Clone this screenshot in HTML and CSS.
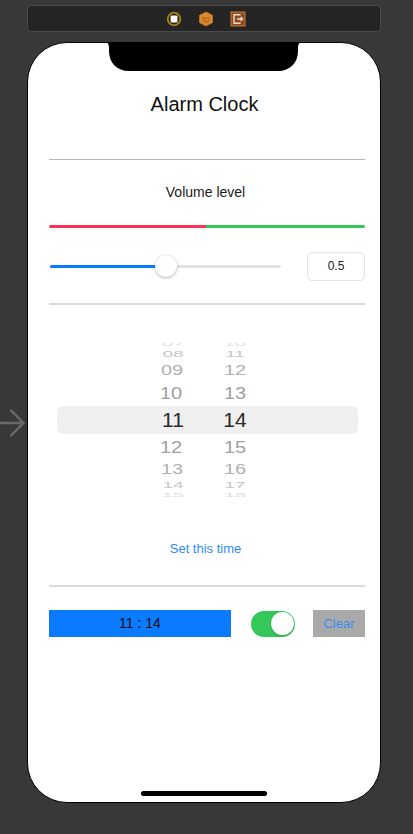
FILE: index.html
```html
<!DOCTYPE html>
<html>
<head>
<meta charset="utf-8">
<link rel="stylesheet" href="styles.css">
</head>
<body>
<div class="canvas">
  <div class="toolbar">
    <svg class="tb-icon" width="16" height="16" viewBox="0 0 16 16">
      <circle cx="8" cy="8" r="6.3" fill="#2a2310" stroke="#a88416" stroke-width="1.8"/>
      <rect x="4.6" y="4.6" width="6.8" height="6.8" rx="1" fill="#ffffff"/>
    </svg>
    <svg class="tb-icon" width="16" height="16" viewBox="0 0 16 16">
      <path d="M8 1 L14.5 4.3 V11.7 L8 15 L1.5 11.7 V4.3 Z" fill="#dd8a2e" stroke="#c0701e" stroke-width="0.8"/>
      <path d="M5 6.2 L8 7.6 L11 6.2 M8 7.6 V11.4 M5 6.2 V9.8 L8 11.4 L11 9.8 V6.2" fill="none" stroke="#a8601c" stroke-width="0.9"/>
    </svg>
    <svg class="tb-icon" width="16" height="16" viewBox="0 0 16 16">
      <rect x="1" y="1" width="14" height="14" fill="#8c4a1e" stroke="#c97c34" stroke-width="1"/>
      <path d="M10 4.5 V3.8 H4 V12.2 H10 V11.5" fill="none" stroke="#e8d8c8" stroke-width="1.4"/>
      <path d="M7 8 H12.5 M10.6 6 L12.6 8 L10.6 10" fill="none" stroke="#e8d8c8" stroke-width="1.3"/>
    </svg>
  </div>

  <svg class="entry-arrow" width="26" height="30" viewBox="0 0 26 30">
    <path d="M0 15 H23.5 M10.5 2 L23.5 15 L10.5 28" fill="none" stroke="#6a6a6a" stroke-width="2.4"/>
  </svg>

  <div class="phone">
    <svg class="notch" width="199" height="29" viewBox="0 0 199 29">
      <path d="M0 0 C3.5 0 5 2 5 6 V9 C5 21 13 29 25 29 H174 C186 29 194 21 194 9 V6 C194 2 195.5 0 199 0 Z" fill="#000"/>
    </svg>

    <h1 class="title">Alarm Clock</h1>
    <div class="divider divider-dark"></div>

    <div class="volume-label">Volume level</div>
    <div class="level-bar">
      <div class="level-red"></div>
      <div class="level-green"></div>
    </div>

    <div class="slider-row">
      <div class="slider">
        <div class="track">
          <div class="track-fill"></div>
        </div>
        <div class="knob"></div>
      </div>
      <div class="value-box">0.5</div>
    </div>

    <div class="divider divider-light divider-slider"></div>

    <div class="picker">
      <div class="prow r0"><span class="cell">07</span><span class="cell">10</span></div>
      <div class="prow r1"><span class="cell">08</span><span class="cell">11</span></div>
      <div class="prow r2"><span class="cell">09</span><span class="cell">12</span></div>
      <div class="prow r3"><span class="cell">10</span><span class="cell">13</span></div>
      <div class="prow r4 selected"><span class="cell">11</span><span class="cell">14</span></div>
      <div class="prow r5"><span class="cell">12</span><span class="cell">15</span></div>
      <div class="prow r6"><span class="cell">13</span><span class="cell">16</span></div>
      <div class="prow r7"><span class="cell">14</span><span class="cell">17</span></div>
      <div class="prow r8"><span class="cell">15</span><span class="cell">18</span></div>
    </div>

    <div class="set-time">Set this time</div>
    <div class="divider divider-light divider-set"></div>

    <div class="alarm-row">
      <div class="alarm-label">11 : 14</div>
      <div class="toggle"><div class="toggle-knob"></div></div>
      <div class="clear-btn">Clear</div>
    </div>

    <div class="home-indicator"></div>
  </div>
</div>
</body>
</html>
```

FILE: styles.css
```css
html, body {
  margin: 0;
  padding: 0;
  background: #383838;
}
body {
  width: 413px;
  height: 834px;
  overflow: hidden;
  font-family: "Liberation Sans", Arial, sans-serif;
}
.canvas {
  position: relative;
  width: 413px;
  height: 834px;
  padding-top: 5px;
  box-sizing: border-box;
}
.toolbar {
  margin-left: 27px;
  width: 354px;
  height: 27px;
  box-sizing: border-box;
  background: #242424;
  border: 1px solid #4b4b4b;
  border-radius: 4px;
  display: flex;
  align-items: center;
  padding-left: 138px;
  gap: 16px;
}
.tb-icon {
  display: block;
  flex: none;
}
.entry-arrow {
  position: absolute;
  left: 0;
  top: 408px;
}
.phone {
  position: relative;
  margin-top: 10px;
  margin-left: 27px;
  width: 354px;
  height: 761px;
  box-sizing: border-box;
  background: #fff;
  border: 1px solid #000;
  border-radius: 40px;
  padding: 0 15px 0 21px;
  display: flex;
  flex-direction: column;
}
.notch {
  position: absolute;
  left: 76px;
  top: -1px;
  display: block;
}
.title {
  margin: 49px 0 0 0;
  font-size: 20px;
  line-height: 24px;
  font-weight: normal;
  color: #111;
  text-align: center;
  padding-right: 5px;
}
.divider {
  flex: none;
}
.divider-dark {
  margin-top: 43px;
  height: 1px;
  background: #b5b5b5;
}
.divider-light {
  height: 2px;
  background: #dadada;
}
.volume-label {
  margin-top: 24px;
  font-size: 14px;
  line-height: 17px;
  text-align: center;
  color: #1a1a1a;
  padding-right: 3px;
}
.level-bar {
  margin-top: 24px;
  height: 3px;
  display: flex;
  border-radius: 2px;
  overflow: hidden;
}
.level-red {
  width: 157px;
  background: #fe3158;
}
.level-green {
  flex: 1;
  background: #35c759;
}
.slider-row {
  margin-top: 24px;
  height: 29px;
  display: flex;
  align-items: center;
}
.slider {
  position: relative;
  width: 233px;
  height: 29px;
  display: flex;
  align-items: center;
  padding: 0 1px;
  box-sizing: border-box;
}
.track {
  width: 100%;
  height: 3px;
  border-radius: 2px;
  background: #e3e3e4;
  overflow: hidden;
}
.track-fill {
  width: 116px;
  height: 100%;
  background: #0a7aff;
}
.knob {
  position: absolute;
  left: 106px;
  top: 3px;
  width: 22px;
  height: 22px;
  border-radius: 50%;
  background: #fff;
  box-shadow: 0 1px 3px rgba(0,0,0,0.28), 0 0 1px rgba(0,0,0,0.15);
}
.value-box {
  margin-left: auto;
  width: 58px;
  height: 29px;
  box-sizing: border-box;
  border: 1px solid #e2e2e2;
  border-radius: 5px;
  font-size: 12px;
  line-height: 27px;
  text-align: center;
  color: #222;
}
.divider-slider {
  margin-top: 22px;
}
.picker {
  margin: 38px 7px 0 8px;
  height: 154px;
  overflow: hidden;
  display: flex;
  flex-direction: column;
}
.prow {
  flex: none;
  display: flex;
  align-items: center;
  padding-left: 96px;
  gap: 22px;
  font-size: 20px;
}
.cell {
  display: inline-block;
  width: 40px;
  line-height: 20px;
  text-align: center;
}
.r0 { height: 5px; color: #dedede; overflow: hidden; align-items: flex-end; }
.r0 .cell { transform: translateY(6px) scaleY(0.28); }
.r1 { height: 12px; color: #c6c6c6; }
.r1 .cell { transform: scaleY(0.48); font-size: 19px; }
.r2 { height: 20px; color: #b0b0b0; }
.r2 .cell { transform: scaleY(0.7); }
.r2 .cell:first-child { transform: translateX(-1px) scaleY(0.7); }
.r3 { height: 26px; color: #9e9e9e; }
.r3 .cell { transform: scaleY(0.86); }
.r3 .cell:first-child { transform: translateX(-2px) scaleY(0.86); }
.r4 {
  height: 28px;
  color: #2a2a2a;
  background: #efeff0;
  border-radius: 6px;
}
.r4 .cell { font-size: 21px; }
.r5 { height: 25px; color: #a0a0a0; }
.r5 .cell { transform: scaleY(0.86); }
.r5 .cell:first-child { transform: translateX(-2px) scaleY(0.86); }
.r6 { height: 20px; color: #b0b0b0; }
.r6 .cell { transform: scaleY(0.7); }
.r6 .cell:first-child { transform: translateX(-1px) scaleY(0.7); }
.r7 { height: 12px; color: #c6c6c6; }
.r7 .cell { transform: scaleY(0.48); font-size: 19px; }
.r8 { height: 6px; color: #dedede; overflow: hidden; align-items: flex-start; }
.r8 .cell { transform: translateY(-6px) scaleY(0.28); }
.set-time {
  margin-top: 44px;
  font-size: 13px;
  line-height: 16px;
  text-align: center;
  color: #2f8af5;
  padding-right: 3px;
}
.divider-set {
  margin-top: 28px;
}
.alarm-row {
  margin-top: 23px;
  height: 27px;
  display: flex;
  align-items: center;
}
.alarm-label {
  width: 182px;
  height: 27px;
  background: #0a7aff;
  font-size: 14px;
  line-height: 27px;
  text-align: center;
  color: #0a0a0a;
}
.toggle {
  margin-left: 20px;
  width: 44px;
  height: 26px;
  border-radius: 13px;
  background: #35c759;
  display: flex;
  align-items: center;
  justify-content: flex-end;
  padding-right: 1.5px;
  box-sizing: border-box;
}
.toggle-knob {
  width: 23px;
  height: 23px;
  border-radius: 50%;
  background: #fff;
  box-shadow: 0 1px 2px rgba(0,0,0,0.2);
}
.clear-btn {
  margin-left: 18px;
  width: 52px;
  height: 27px;
  flex: none;
  background: #a9a9a9;
  font-size: 13px;
  line-height: 27px;
  text-align: center;
  color: #3a8cf3;
  margin-right: -1px;
}
.home-indicator {
  margin-top: auto;
  margin-bottom: 6px;
  margin-left: 92px;
  width: 126px;
  height: 5px;
  border-radius: 3px;
  background: #000;
  align-self: flex-start;
}
```
